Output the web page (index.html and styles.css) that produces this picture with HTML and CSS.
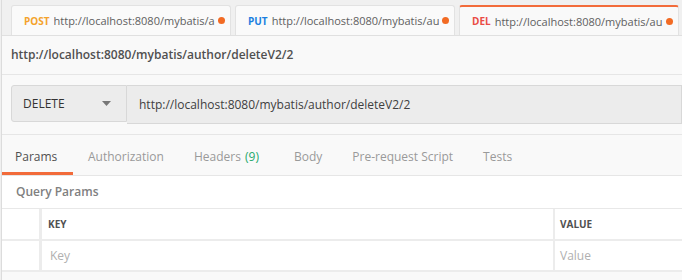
FILE: index.html
```html
<!DOCTYPE html>
<html lang="en">
<head>
  <meta charset="UTF-8">
  <title>Postman - deleteV2</title>
  <link rel="stylesheet" href="styles.css">
</head>
<body>
  <div class="app">
    <div class="tab-bar">
      <div class="tab">
        <span class="method post">POST</span>
        <span class="tab-url">http://localhost:8080/mybatis/a</span>
        <span class="dot"></span>
      </div>
      <div class="tab">
        <span class="method put">PUT</span>
        <span class="tab-url">http://localhost:8080/mybatis/au</span>
        <span class="dot"></span>
      </div>
      <div class="tab active">
        <span class="method del">DEL</span>
        <span class="tab-url">http://localhost:8080/mybatis/au</span>
        <span class="dot"></span>
      </div>
    </div>

    <div class="request-title">http://localhost:8080/mybatis/author/deleteV2/2</div>

    <div class="request-bar">
      <div class="method-select">
        <span>DELETE</span>
        <svg class="caret" width="9" height="5" viewBox="0 0 9 5"><path d="M0 0h9L4.5 5z" fill="#777"/></svg>
      </div>
      <div class="url-input">http://localhost:8080/mybatis/author/deleteV2/2</div>
    </div>

    <div class="nav">
      <div class="nav-item active">Params</div>
      <div class="nav-item">Authorization</div>
      <div class="nav-item headers">Headers <span class="count">(9)</span></div>
      <div class="nav-item">Body</div>
      <div class="nav-item">Pre-request Script</div>
      <div class="nav-item">Tests</div>
    </div>

    <div class="query-title">Query Params</div>

    <div class="params-table">
      <div class="row head">
        <div class="cell check"></div>
        <div class="cell key">KEY</div>
        <div class="cell value">VALUE</div>
      </div>
      <div class="row">
        <div class="cell check"></div>
        <div class="cell key placeholder">Key</div>
        <div class="cell value placeholder">Value</div>
      </div>
    </div>
  </div>
</body>
</html>
```

FILE: styles.css
```css
body {
  margin: 0;
  font-family: 'Open Sans', 'Liberation Sans', sans-serif;
  background: #f0f0f0;
  overflow: hidden;
}

.app {
  margin-left: 1px;
  border-left: 1px solid #dcdcdc;
  width: 680px;
  height: 280px;
  background: #f9f9f9;
}

/* top request tabs */
.tab-bar {
  display: flex;
  gap: 4px;
  height: 30px;
  padding: 5px 0 0 9px;
  background: #f0f0f0;
  border-bottom: 1px solid #e0e0e0;
  overflow: hidden;
}

.tab {
  flex: 0 0 220px;
  width: 220px;
  min-width: 0;
  box-sizing: border-box;
  height: 31px;
  display: flex;
  align-items: center;
  padding: 0 5px 1px 12px;
  background: #fafafa;
  border: 1px solid #e2e2e2;
  border-bottom: none;
  border-radius: 3px 3px 0 0;
  font-size: 11px;
  color: #505050;
  white-space: nowrap;
  overflow: hidden;
}

.tab.active {
  background: #f9f9f9;
  border-top: 2px solid #f26b3a;
  position: relative;
  z-index: 1;
}

.method {
  font-size: 10px;
  font-weight: 700;
  margin-right: 4px;
}

.method.post { color: #f4a32c; }
.method.put { color: #1a7fe0; }
.method.del { color: #ea4c45; }

.tab-url {
  flex: 1;
  min-width: 0;
  overflow: hidden;
  color: #606060;
}

.dot {
  flex: none;
  width: 7px;
  height: 7px;
  border-radius: 50%;
  background: #f26b24;
  margin-left: 3px;
}

.request-title {
  height: 38px;
  line-height: 38px;
  padding-left: 9px;
  font-size: 12px;
  font-weight: 600;
  color: #505050;
  border-bottom: 1px solid #e6e6e6;
}

/* method + url */
.request-bar {
  display: flex;
  padding: 10px 0 10px 9px;
  border-bottom: 1px solid #e6e6e6;
}

.method-select,
.url-input {
  height: 37px;
  display: flex;
  align-items: center;
  background: #ececec;
  border: 1px solid #d8d8d8;
  color: #333;
  font-size: 12px;
}

.method-select {
  width: 116px;
  box-sizing: border-box;
  padding: 0 15px 0 11px;
  justify-content: space-between;
  border-radius: 3px 0 0 3px;
}

.url-input {
  flex: 1;
  padding-left: 12px;
  border-left: none;
  color: #404040;
}

/* params / auth / headers nav */
.nav {
  display: flex;
  height: 40px;
  border-bottom: 1px solid #e6e6e6;
}

.nav-item {
  box-sizing: border-box;
  height: 40px;
  padding: 7px 15px 0;
  line-height: 30px;
  border-bottom: 3px solid transparent;
  font-size: 12px;
  color: #9a9a9a;
}

.nav-item.active {
  width: 71px;
  padding-left: 13px;
  color: #505050;
  border-bottom-color: #f26b3a;
}

.nav-item.headers {
  padding-right: 20px;
}

.count {
  margin-left: 1px;
  color: #26a96c;
}

.query-title {
  height: 32px;
  line-height: 32px;
  padding-left: 14px;
  font-size: 12px;
  font-weight: 600;
  color: #808080;
  background: #fff;
  border-bottom: 1px solid #e8e8e8;
}

.params-table {
  background: #fff;
}

.row {
  display: flex;
  height: 29px;
  border-bottom: 2px solid #ececec;
}

.row.head {
  height: 30px;
}

.cell {
  display: flex;
  align-items: center;
  box-sizing: border-box;
}

.cell.check {
  width: 40px;
  border-right: 3px solid #ececec;
}

.cell.key {
  width: 513px;
  padding-left: 6px;
  border-right: 2px solid #ececec;
}

.cell.value {
  flex: 1;
  padding-left: 5px;
}

.head .cell {
  font-size: 10px;
  font-weight: 700;
  color: #505050;
}

.placeholder {
  color: #b0b0b0;
  font-size: 12px;
}

.cell.key.placeholder {
  padding-left: 8px;
}
```
